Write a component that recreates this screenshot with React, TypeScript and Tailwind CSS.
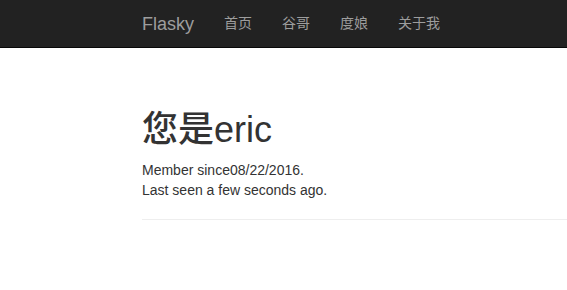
const navLinks = ['首页', '谷哥', '度娘', '关于我'];

export default function App() {
  return (
    <div
      className="min-h-screen bg-white text-[#333] text-[14px] leading-[20px]"
      style={{ fontFamily: '"Liberation Sans", "Noto Sans CJK SC", sans-serif' }}
    >
      <nav className="h-[48px] bg-[#222] border-b border-[#080808]">
        <div className="flex pl-[127px]">
          <a className="block px-[15px] py-[14px] text-[18px] leading-[20px] text-[#9d9d9d]">Flasky</a>
          <ul className="flex">
            {navLinks.map(l => (
              <li key={l}>
                <a className="block px-[15px] py-[13px] leading-[20px] text-[#9d9d9d]">{l}</a>
              </li>
            ))}
          </ul>
        </div>
      </nav>

      <div className="pl-[142px]">
        <div className="mt-[62px] pb-[9px] border-b border-[#eee]">
          <h1 className="text-[36px] leading-[1.1] font-medium mb-[10px]">您是eric</h1>
          <p className="mb-[10px]">
            Member since08/22/2016.
            <br />
            Last seen a few seconds ago.
          </p>
        </div>
      </div>
    </div>
  );
}
